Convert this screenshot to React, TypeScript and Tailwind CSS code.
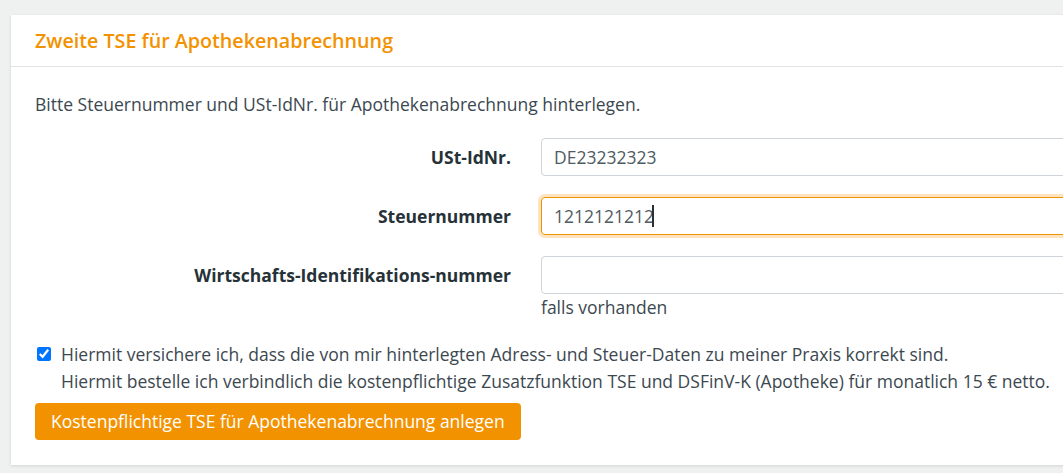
export default function App() {
  return (
    <div
      className="w-[1063px] h-[473px] overflow-hidden bg-[#eff0f0] pt-[15px] pl-[11px]"
      style={{ fontFamily: '"Open Sans", sans-serif' }}
    >
      <div className="w-[1100px] h-[450px] bg-white shadow-[0_1px_3px_rgba(0,0,0,0.12)]">
        <div className="h-[52px] border-b border-[#e3e3e3] px-6 flex items-center">
          <h2 className="text-[19.7px] font-semibold text-[#f39200]">
            Zweite TSE für Apothekenabrechnung
          </h2>
        </div>
        <div className="px-6 pt-[25px] text-[17.5px] text-[#3c4850]">
          <p className="leading-6">
            Bitte Steuernummer und USt-IdNr. für Apothekenabrechnung hinterlegen.
          </p>

          <div className="mt-[22px] flex flex-col gap-[21px]">
            <div className="flex items-center">
              <label className="w-[476px] shrink-0 text-right font-bold text-[#263238]">USt-IdNr.</label>
              <input
                className="ml-[30px] w-[560px] shrink-0 h-[38px] rounded-[4px] border border-[#ced4da] px-3 text-[#4f5b62] outline-none"
                defaultValue="DE23232323"
              />
            </div>
            <div className="flex items-center">
              <label className="w-[476px] shrink-0 text-right font-bold text-[#263238]">Steuernummer</label>
              <div className="ml-[30px] w-[560px] shrink-0 h-[38px] rounded-[4px] border border-[#f39200] shadow-[0_0_0_3px_rgba(243,146,0,0.25)] px-3 text-[#4f5b62] flex items-center">
                <span>1212121212</span>
                <span className="-ml-[2px] w-[2px] h-[22px] bg-[#263238]" />
              </div>
            </div>
            <div className="flex">
              <label className="w-[476px] shrink-0 h-[38px] flex items-center justify-end font-bold text-[#263238]">
                Wirtschafts-Identifikations-nummer
              </label>
              <div className="ml-[30px] shrink-0 flex flex-col">
                <input className="w-[560px] h-[38px] rounded-[4px] border border-[#ced4da] px-3 outline-none" />
                <span className="mt-[1px] leading-6">falls vorhanden</span>
              </div>
            </div>
          </div>

          <div className="mt-[22px] flex gap-[10px]">
            <input
              type="checkbox"
              defaultChecked
              className="mt-[6px] ml-[2px] w-[14px] h-[14px] shrink-0 accent-[#0075ff]"
            />
            <div className="leading-[27px]">
              <div>
                Hiermit versichere ich, dass die von mir hinterlegten Adress- und Steuer-Daten zu meiner Praxis korrekt sind.
              </div>
              <div>
                Hiermit bestelle ich verbindlich die kostenpflichtige Zusatzfunktion TSE und DSFinV-K (Apotheke) für monatlich 15 € netto.
              </div>
            </div>
          </div>

          <button className="mt-[8px] h-[37px] px-4 rounded-[4px] bg-[#f39200] text-white text-[17.5px]">
            Kostenpflichtige TSE für Apothekenabrechnung anlegen
          </button>
        </div>
      </div>
    </div>
  );
}
